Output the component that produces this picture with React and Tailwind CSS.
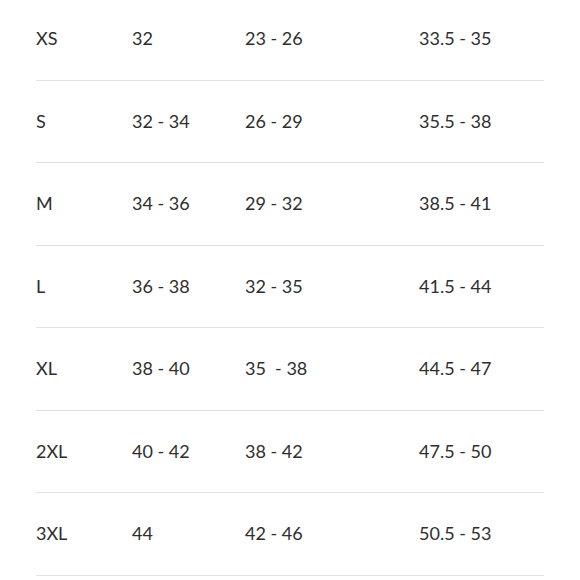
import React from 'react';

const rows = [
  ['XS', '32', '23 - 26', '33.5 - 35'],
  ['S', '32 - 34', '26 - 29', '35.5 - 38'],
  ['M', '34 - 36', '29 - 32', '38.5 - 41'],
  ['L', '36 - 38', '32 - 35', '41.5 - 44'],
  ['XL', '38 - 40', '35  - 38', '44.5 - 47'],
  ['2XL', '40 - 42', '38 - 42', '47.5 - 50'],
  ['3XL', '44', '42 - 46', '50.5 - 53'],
];

export default function App() {
  return (
    <div
      className="w-[580px] h-[580px] overflow-hidden bg-white"
      style={{ fontFamily: 'Lato, "Open Sans", sans-serif' }}
    >
      <div className="mx-[36px] -mt-[2px]">
        {rows.map((r) => (
          <div
            key={r[0]}
            className="grid grid-cols-[96px_113px_174px_1fr] items-center h-[82.5px] border-b-[1.5px] border-[#e2e2e2] text-[18px] text-[#2e2e2e] whitespace-pre"
          >
            <div>{r[0]}</div>
            <div>{r[1]}</div>
            <div>{r[2]}</div>
            <div>{r[3]}</div>
          </div>
        ))}
      </div>
    </div>
  );
}
